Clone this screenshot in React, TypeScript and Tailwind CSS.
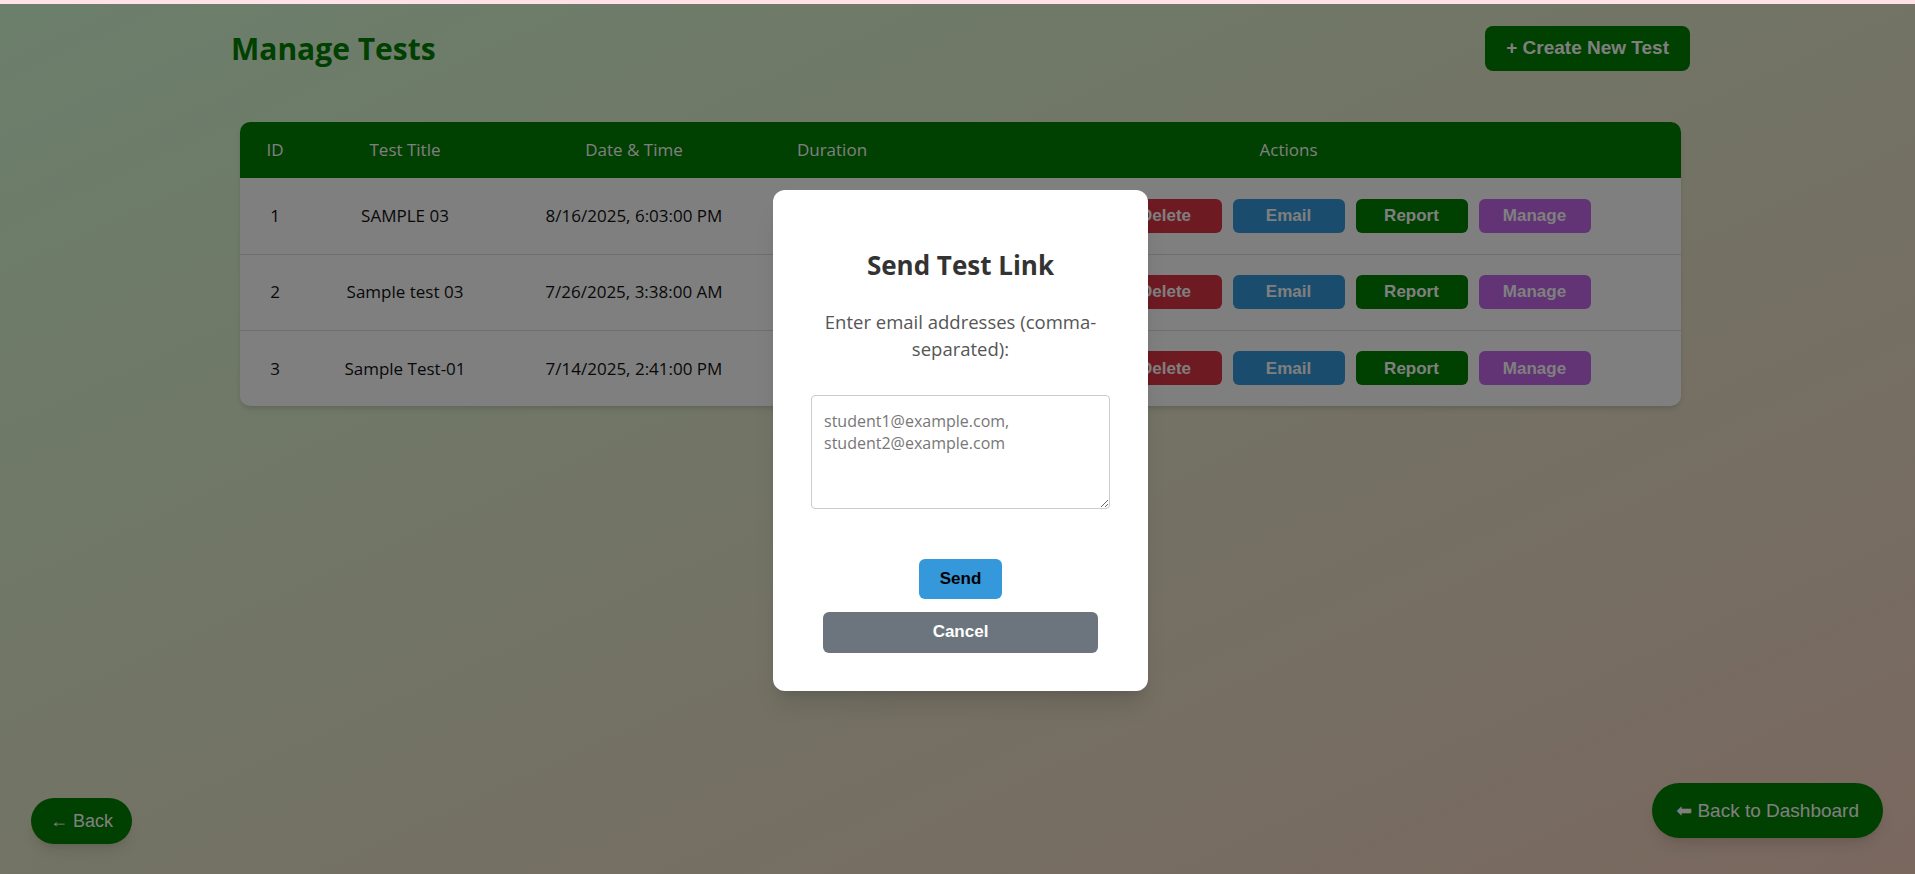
import React, { useState } from "react";

type TestRow = {
  id: number;
  title: string;
  date: string;
  duration: string;
};

const tests: TestRow[] = [
  { id: 1, title: "SAMPLE 03", date: "8/16/2025, 6:03:00 PM", duration: "30 mins" },
  { id: 2, title: "Sample test 03", date: "7/26/2025, 3:38:00 AM", duration: "45 mins" },
  { id: 3, title: "Sample Test-01", date: "7/14/2025, 2:41:00 PM", duration: "60 mins" },
];

const actionBtn =
  "w-[112px] h-[34px] rounded-[6px] text-white text-[17px] font-bold font-['Liberation_Sans',Arial,sans-serif]";

const App: React.FC = () => {
  const [emails, setEmails] = useState("");

  return (
    <div className="relative h-[874px] w-full overflow-hidden bg-[linear-gradient(to_bottom_right,#d8ffd8,#f4d0be)] font-['Open_Sans',sans-serif]">
      <div className="h-[4px] bg-[#ffe1e7]" />

      <div className="ml-[231px] w-[1459px] pt-[22px]">
        <div className="flex items-center justify-between h-[45px]">
          <h2 className="text-[30px] font-bold text-[#008000] leading-none">Manage Tests</h2>
          <button className="h-[45px] px-[21px] rounded-[8px] bg-[#008000] text-white text-[19px] font-bold font-['Liberation_Sans',Arial,sans-serif]">
            + Create New Test
          </button>
        </div>

        <div className="mt-[51px] mx-[9px] rounded-[10px] overflow-hidden bg-white shadow-md">
          <table className="w-full table-fixed border-collapse text-[17px]">
            <thead>
              <tr className="bg-[#008000] text-white h-[56px]">
                <th className="w-[70px] font-normal">ID</th>
                <th className="w-[190px] font-normal">Test Title</th>
                <th className="w-[268px] font-normal">Date &amp; Time</th>
                <th className="w-[128px] font-normal">Duration</th>
                <th className="font-normal">Actions</th>
              </tr>
            </thead>
            <tbody>
              {tests.map((t, i) => (
                <tr
                  key={t.id}
                  className={`h-[76px] text-[#111] text-center ${i < tests.length - 1 ? "border-b border-[#dedede]" : ""}`}
                >
                  <td>{t.id}</td>
                  <td>{t.title}</td>
                  <td>{t.date}</td>
                  <td>{t.duration}</td>
                  <td>
                    <div className="flex justify-center gap-[11px]">
                      <button className={`${actionBtn} bg-[#f0a030]`}>Edit</button>
                      <button className={`${actionBtn} bg-[#dc3545]`}>Delete</button>
                      <button className={`${actionBtn} bg-[#3498db]`}>Email</button>
                      <button className={`${actionBtn} bg-[#008000]`}>Report</button>
                      <button className={`${actionBtn} bg-[#c466ea]`}>Manage</button>
                    </div>
                  </td>
                </tr>
              ))}
            </tbody>
          </table>
        </div>
      </div>

      <button className="absolute left-[31px] bottom-[30px] h-[46px] px-[19px] rounded-full bg-[#008000] text-white text-[18px] shadow-lg font-['Liberation_Sans',Arial,sans-serif]">
        ← Back
      </button>
      <button className="absolute right-[32px] bottom-[36px] h-[55px] px-[24px] rounded-full bg-[#008000] text-white text-[19px] shadow-lg font-['Liberation_Sans',Arial,sans-serif]">
        <span className="font-['DejaVu_Sans',sans-serif]">⬅︎</span> Back to Dashboard
      </button>

      <div className="absolute inset-x-0 top-[4px] bottom-0 bg-black/50 flex items-center justify-center pl-[6px] pt-[2px]">
        <div className="w-[375px] h-[501px] bg-white rounded-[12px] shadow-xl px-[37px] pt-[59px] flex flex-col items-center">
          <h3 className="text-[26px] font-bold text-[#333] leading-[32px]">Send Test Link</h3>
          <p className="mt-[27px] text-[18.5px] leading-[27px] text-[#555] text-center">
            Enter email addresses (comma-separated):
          </p>
          <textarea
            value={emails}
            onChange={(e) => setEmails(e.target.value)}
            placeholder="student1@example.com, student2@example.com"
            className="mt-[33px] w-[299px] h-[114px] border border-[#ccc] rounded-[4px] px-3 pt-[14px] pb-3 text-[16px] leading-[22px] text-[#333] placeholder:text-[#777] outline-none"
          />
          <button className="mt-[50px] w-[83px] h-[40px] rounded-[6px] bg-[#3498db] text-black text-[17px] font-bold font-['Liberation_Sans',Arial,sans-serif]">
            Send
          </button>
          <button className="mt-[13px] w-[275px] h-[41px] rounded-[6px] bg-[#6c757d] text-white text-[17px] font-bold font-['Liberation_Sans',Arial,sans-serif]">
            Cancel
          </button>
        </div>
      </div>
    </div>
  );
};

export default App;
